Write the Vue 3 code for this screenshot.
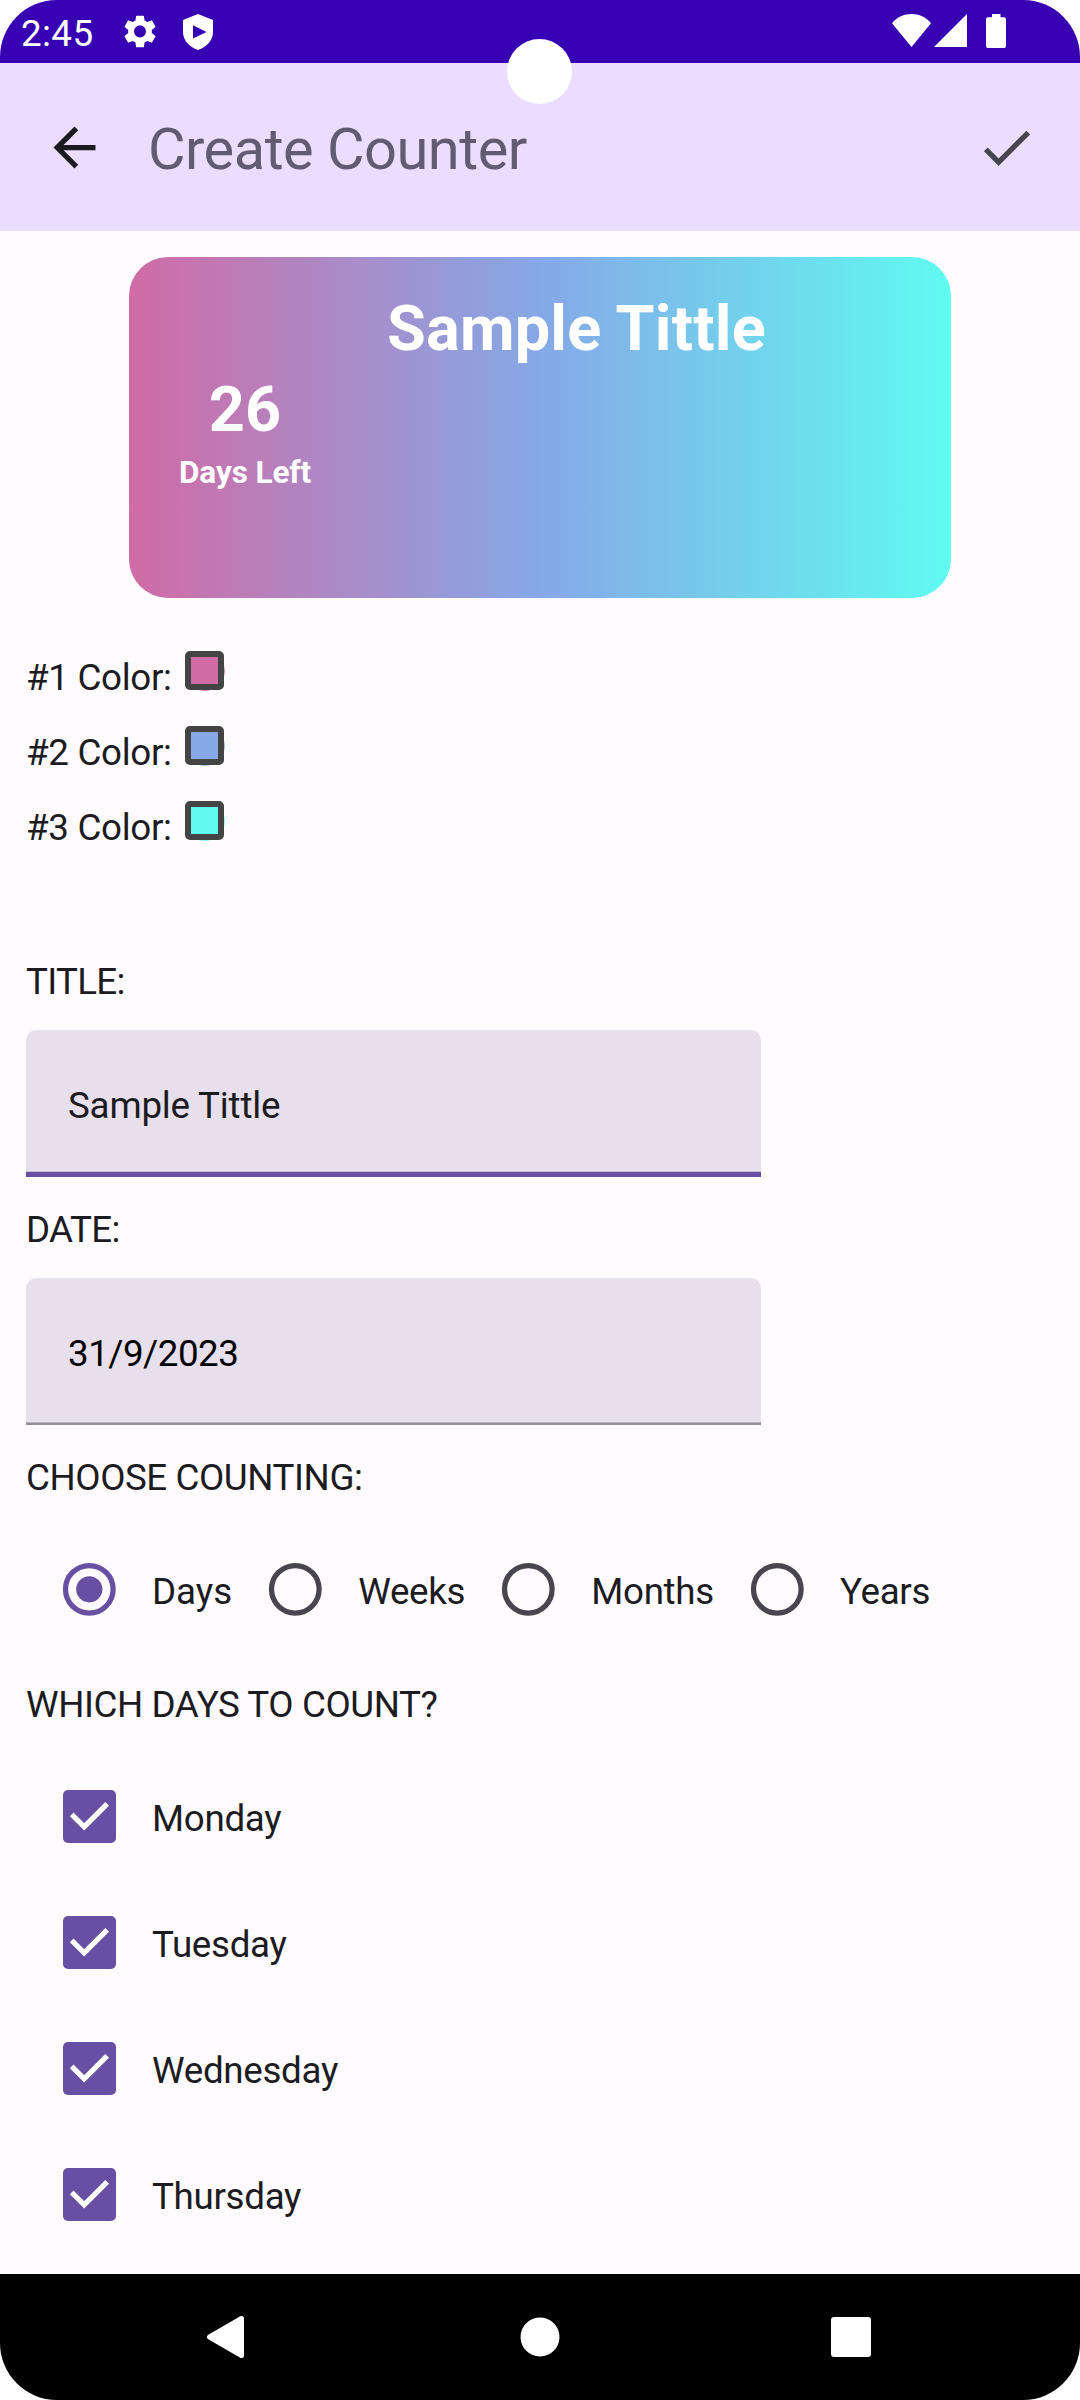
<script setup>
import { ref } from 'vue'

const title = ref('Sample Tittle')
const date = ref('31/9/2023')
const colors = ref(['#d16ba5', '#86a8e7', '#5ffbf1'])
const units = ['Days', 'Weeks', 'Months', 'Years']
const unit = ref('Days')
const days = ['Monday', 'Tuesday', 'Wednesday', 'Thursday']
</script>

<template>
  <div class="screen">
    <header class="status">
      <span class="clock">2:45</span>
      <svg class="gear" viewBox="2.3 2 19.4 20" preserveAspectRatio="none">
        <path fill="#fff" d="M19.14 12.94c.04-.3.06-.61.06-.94 0-.32-.02-.64-.07-.94l2.03-1.58c.18-.14.23-.41.12-.61l-1.92-3.32c-.12-.22-.37-.29-.59-.22l-2.39.96c-.5-.38-1.03-.7-1.62-.94l-.36-2.54c-.04-.24-.24-.41-.48-.41h-3.84c-.24 0-.43.17-.47.41l-.36 2.54c-.59.24-1.13.57-1.62.94l-2.39-.96c-.22-.08-.47 0-.59.22L2.74 8.87c-.12.21-.08.47.12.61l2.03 1.58c-.05.3-.09.63-.09.94s.02.64.07.94l-2.03 1.58c-.18.14-.23.41-.12.61l1.92 3.32c.12.22.37.29.59.22l2.39-.96c.5.38 1.03.7 1.62.94l.36 2.54c.05.24.24.41.48.41h3.84c.24 0 .44-.17.47-.41l.36-2.54c.59-.24 1.13-.56 1.62-.94l2.39.96c.22.08.47 0 .59-.22l1.92-3.32c.12-.22.07-.47-.12-.61l-2.01-1.58zM12 15.6c-1.98 0-3.6-1.62-3.6-3.6s1.62-3.6 3.6-3.6 3.6 1.62 3.6 3.6-1.62 3.6-3.6 3.6z" />
      </svg>
      <svg class="shield" viewBox="0 0 30 36">
        <path fill="#fff" fill-rule="evenodd" d="M15 0 L30 6 V18 C30 26 24 33 15 36 C6 33 0 26 0 18 V6 Z M10 11.3 V24.6 L23.6 18 Z" />
      </svg>
      <span class="spacer"></span>
      <svg class="wifi" viewBox="0 0 39 33"><path fill="#fff" d="M19.5 33 L0 9.2 C5 3 12 0 19.5 0 C27 0 34 3 39 9.2 Z" /></svg>
      <svg class="signal" viewBox="0 0 33 33"><path fill="#fff" d="M0 33 L33 0 V33 Z" /></svg>
      <svg class="battery" viewBox="0 0 20 34"><path fill="#fff" d="M6 0 H14.5 V3.3 H18 Q20 3.3 20 5.3 V32 Q20 34 18 34 H2 Q0 34 0 32 V5.3 Q0 3.3 2 3.3 H6 Z" /></svg>
    </header>

    <div class="appbar">
      <svg class="icon" viewBox="0 0 24 24"><path fill="#1c1b1f" d="M20 11H7.83l5.59-5.59L12 4l-8 8 8 8 1.41-1.41L7.83 13H20v-2z" /></svg>
      <h1>Create Counter</h1>
      <svg class="icon" viewBox="0 0 24 24"><path fill="#49454f" d="M9 16.17L4.83 12l-1.42 1.41L9 19 21 7l-1.41-1.41z" /></svg>
    </div>

    <main>
      <section class="card" :style="{ background: `linear-gradient(90deg, ${colors.join(', ')})` }">
        <div class="left">
          <div class="count">26</div>
          <div class="caption">Days Left</div>
        </div>
        <div class="card-title">{{ title }}</div>
      </section>

      <div class="colors">
        <div v-for="(c, i) in colors" :key="c" class="color-row">
          <span>#{{ i + 1 }} Color:</span>
          <svg class="swatch" viewBox="0 0 40 40">
            <circle cx="20" cy="20" r="19.8" :fill="c" />
            <rect x="3" y="3" width="33" height="33" rx="2" fill="none" stroke="#444" stroke-width="6" />
          </svg>
        </div>
      </div>

      <div class="label first">TITLE:</div>
      <div class="field focused">{{ title }}</div>
      <div class="label short">DATE:</div>
      <div class="field date">{{ date }}</div>

      <div class="label">CHOOSE COUNTING:</div>
      <div class="radios">
        <div v-for="u in units" :key="u" class="option">
          <svg class="control" viewBox="0 0 126 126">
            <circle cx="63.3" cy="63.3" r="23.8" fill="none" :stroke="u === unit ? '#6750a4' : '#49454f'" stroke-width="5.25" />
            <circle v-if="u === unit" cx="63.3" cy="63.3" r="13.1" fill="#6750a4" />
          </svg>
          <span>{{ u }}</span>
        </div>
      </div>

      <div class="label">WHICH DAYS TO COUNT?</div>
      <div class="checks">
        <div v-for="d in days" :key="d" class="option">
          <svg class="control" viewBox="0 0 126 126">
            <rect x="37" y="37" width="53" height="53" rx="5" fill="#6750a4" />
            <path d="M47.6 63.3 L58.2 73.8 L79.3 52.7" fill="none" stroke="#fff" stroke-width="5.25" stroke-linecap="square" />
          </svg>
          <span>{{ d }}</span>
        </div>
      </div>
    </main>

    <nav class="navbar">
      <svg viewBox="0 0 42 42"><path fill="#fff" stroke="#fff" stroke-width="5" stroke-linejoin="round" d="M4.5 21 L36.5 2.5 V39.5 Z" /></svg>
      <svg class="home" viewBox="0 0 42 42"><circle cx="21" cy="21" r="19.5" fill="#fff" /></svg>
      <svg viewBox="0 0 42 42"><rect x="1" y="1" width="40" height="40" rx="3" fill="#fff" /></svg>
    </nav>

    <div class="camera"></div>
  </div>
</template>

<style>
body {
  margin: 0;
  background: #fff;
}
</style>

<style scoped>
.screen {
  position: relative;
  box-sizing: border-box;
  width: 1080px;
  height: 2400px;
  overflow: hidden;
  border-radius: 57px;
  background: #fffbff;
  color: #1c1b1f;
  display: flex;
  flex-direction: column;
  font-family: Roboto, "Liberation Sans", sans-serif;
  font-size: 36.75px;
  letter-spacing: -0.32px;
}
svg {
  display: block;
  flex: none;
}
.status {
  flex: none;
  height: 63px;
  display: flex;
  align-items: flex-start;
  background: #3700b3;
  color: #fff;
  padding: 0 74px 0 21px;
  box-sizing: border-box;
}
.clock {
  width: 103px;
  line-height: 67px;
  height: 63px;
  letter-spacing: 0.4px;
}
.gear {
  width: 32px;
  height: 33px;
  margin-top: 15px;
}
.shield {
  width: 30px;
  height: 36px;
  margin: 14px 0 0 27px;
}
.spacer {
  flex: 1;
}
.wifi {
  width: 39px;
  height: 33px;
  margin-top: 14px;
}
.signal {
  width: 33px;
  height: 33px;
  margin: 14px 0 0 3px;
}
.battery {
  width: 20px;
  height: 34px;
  margin: 14px 0 0 19px;
}
.appbar {
  flex: none;
  height: 168px;
  display: flex;
  align-items: center;
  background: #eaddff;
  padding: 0 42px 0 43px;
}
.icon {
  width: 63px;
  height: 63px;
}
h1 {
  flex: 1;
  margin: 0 0 0 42px;
  padding-top: 4px;
  font-size: 57.75px;
  font-weight: 400;
  line-height: 76px;
  letter-spacing: -0.5px;
  color: #625b71;
}
main {
  flex: 1;
  min-height: 0;
  overflow: hidden;
  padding: 26px 26px 0;
}
.card {
  box-sizing: border-box;
  width: 822px;
  height: 341px;
  margin: 0 auto;
  border-radius: 39px;
  display: flex;
  color: #fff;
  font-weight: 700;
  letter-spacing: 0;
}
.left {
  width: 132px;
  margin-left: 50px;
  padding-top: 115px;
  text-align: center;
  white-space: nowrap;
}
.count {
  font-size: 63px;
  line-height: 75px;
}
.caption {
  font-size: 31.5px;
  line-height: 52px;
  letter-spacing: -0.1px;
}
.card-title {
  margin-left: 76px;
  padding-top: 34px;
  font-size: 63px;
  line-height: 75px;
  letter-spacing: 0.2px;
  white-space: nowrap;
}
.colors {
  margin-top: 48px;
}
.color-row {
  display: flex;
  height: 75px;
  line-height: 63px;
}
.color-row span {
  width: 159px;
}
.swatch {
  width: 40px;
  height: 40px;
  margin-top: 5px;
}
.label {
  margin: 27px 0 23px;
  line-height: 51px;
  letter-spacing: -0.43px;
}
.label.short {
  letter-spacing: -0.7px;
}
.label.first {
  margin-top: 85px;
  letter-spacing: -0.7px;
}
.field {
  box-sizing: border-box;
  width: 735px;
  height: 147px;
  padding: 2px 42px 0;
  line-height: 147px;
  border-radius: 10.5px 10.5px 0 0;
  background: #e7dfec;
  box-shadow: inset 0 -2px #938f99, inset 0 -3px #b5b0bb;
}
.field.focused {
  box-shadow: inset 0 -5px #6750a4, inset 0 -6px #c6bdd3;
  letter-spacing: -0.2px;
}
.field.date {
  color: #000;
  letter-spacing: -0.5px;
}
.radios {
  display: flex;
}
.option {
  display: flex;
  align-items: center;
  height: 126px;
}
.option span {
  min-width: 80px;
  padding-top: 5px;
}
.control {
  width: 126px;
  height: 126px;
}
.radios .option:first-child span {
  letter-spacing: 0;
}
.navbar {
  flex: none;
  height: 126px;
  background: #000;
  display: flex;
  align-items: center;
  justify-content: space-between;
  padding: 0 208px 0 205px;
}
.navbar svg {
  width: 42px;
  height: 42px;
}
.navbar .home {
  margin-left: 3px;
}
.camera {
  position: absolute;
  left: 507px;
  top: 39px;
  width: 65px;
  height: 65px;
  border-radius: 50%;
  background: #fff;
}
</style>
